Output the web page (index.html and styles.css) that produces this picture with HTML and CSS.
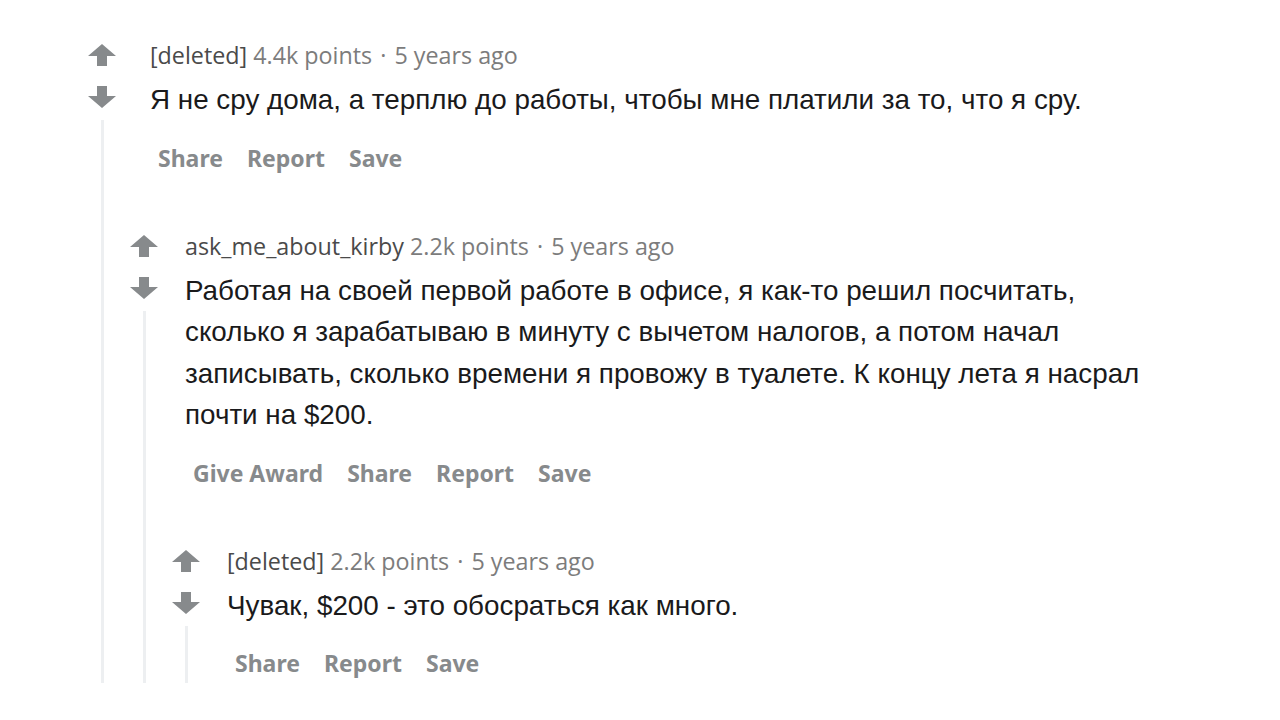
FILE: index.html
```html
<!DOCTYPE html>
<html lang="ru">
<head>
<meta charset="utf-8">
<title>Comments</title>
<link rel="stylesheet" href="styles.css">
</head>
<body>
<div class="thread">
  <div class="comment comment--top">
    <div class="gutter">
      <svg class="vote vote--up" viewBox="0 0 28 22"><path d="M14 0 L28 12 L19 12 L19 22 L9 22 L9 12 L0 12 Z"/></svg>
      <svg class="vote vote--down" viewBox="0 0 28 22"><path d="M14 22 L28 10 L19 10 L19 0 L9 0 L9 10 L0 10 Z"/></svg>
      <div class="thread-line"></div>
    </div>
    <div class="main">
      <div class="entry">
        <div class="meta"><span class="author">[deleted]</span> <span class="score">4.4k points</span> <span class="dot">·</span> <span class="time">5 years ago</span></div>
        <p class="text">Я не сру дома, а терплю до работы, чтобы мне платили за то, что я сру.</p>
        <div class="actions"><button class="act">Share</button><button class="act">Report</button><button class="act">Save</button></div>
      </div>
      <div class="children">
        <div class="comment">
          <div class="gutter">
            <svg class="vote vote--up" viewBox="0 0 28 22"><path d="M14 0 L28 12 L19 12 L19 22 L9 22 L9 12 L0 12 Z"/></svg>
            <svg class="vote vote--down" viewBox="0 0 28 22"><path d="M14 22 L28 10 L19 10 L19 0 L9 0 L9 10 L0 10 Z"/></svg>
            <div class="thread-line"></div>
          </div>
          <div class="main">
            <div class="entry">
              <div class="meta"><span class="author">ask_me_about_kirby</span> <span class="score">2.2k points</span> <span class="dot">·</span> <span class="time">5 years ago</span></div>
              <p class="text">Работая на своей первой работе в офисе, я как-то решил посчитать, сколько я зарабатываю в минуту с вычетом налогов, а потом начал записывать, сколько времени я провожу в туалете. К концу лета я насрал почти на $200.</p>
              <div class="actions"><button class="act">Give Award</button><button class="act">Share</button><button class="act">Report</button><button class="act">Save</button></div>
            </div>
            <div class="children">
              <div class="comment">
                <div class="gutter">
                  <svg class="vote vote--up" viewBox="0 0 28 22"><path d="M14 0 L28 12 L19 12 L19 22 L9 22 L9 12 L0 12 Z"/></svg>
                  <svg class="vote vote--down" viewBox="0 0 28 22"><path d="M14 22 L28 10 L19 10 L19 0 L9 0 L9 10 L0 10 Z"/></svg>
                  <div class="thread-line"></div>
                </div>
                <div class="main">
                  <div class="entry">
                    <div class="meta"><span class="author">[deleted]</span> <span class="score">2.2k points</span> <span class="dot">·</span> <span class="time">5 years ago</span></div>
                    <p class="text">Чувак, $200 - это обосраться как много.</p>
                    <div class="actions"><button class="act">Share</button><button class="act">Report</button><button class="act">Save</button></div>
                  </div>
                </div>
              </div>
            </div>
          </div>
        </div>
      </div>
    </div>
  </div>
</div>
</body>
</html>
```

FILE: styles.css
```css
html, body {
  margin: 0;
  padding: 0;
  background: #ffffff;
}

.thread {
  width: 1069px;
  padding: 31px 0 0 81px;
}

.comment {
  display: flex;
}

.gutter {
  flex: none;
  width: 42px;
  display: flex;
  flex-direction: column;
  align-items: center;
}

.vote {
  display: block;
  width: 28px;
  height: 22px;
  fill: #878a8c;
}

.vote--up {
  margin-top: 13px;
}

.vote--down {
  margin-top: 20px;
}

.thread-line {
  flex: 1;
  width: 3px;
  margin-top: 12px;
  background: #edeff1;
}

.main {
  flex: 1;
  min-width: 0;
}

.entry {
  padding-left: 20px;
}

.comment--top > .main > .entry {
  padding-left: 27px;
}

.meta {
  height: 48px;
  line-height: 48px;
  font-family: "Open Sans", "Noto Sans", sans-serif;
  font-weight: 400;
  font-size: 23.3px;
  color: #7c7c7c;
  white-space: nowrap;
}

.author {
  color: #4a4a4a;
}

.dot {
  padding: 0 2px;
}

.text {
  margin: 0;
  font-family: "Liberation Sans", Arial, sans-serif;
  font-size: 27.8px;
  line-height: 41.5px;
  color: #1a1a1b;
}

.actions {
  display: flex;
  gap: 8px;
  margin-top: 17px;
  height: 40px;
}

.act {
  border: 0;
  background: transparent;
  padding: 0 8px;
  height: 40px;
  font-family: "Noto Sans", "Open Sans", sans-serif;
  font-weight: 700;
  font-size: 23px;
  color: #878a8c;
  cursor: pointer;
}

.children > .comment {
  margin-top: 44px;
}
```
